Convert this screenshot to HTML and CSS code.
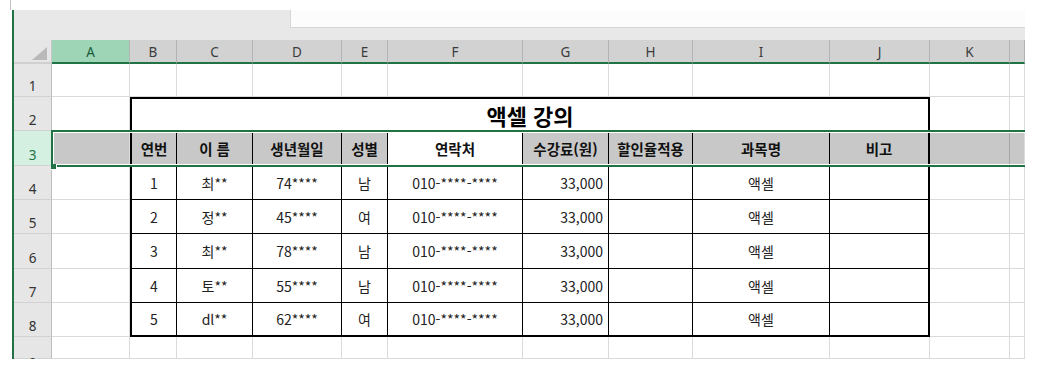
FILE: index.html
```html
<!DOCTYPE html>
<html lang="ko">
<head>
  <meta charset="UTF-8">
  <title>액셀 강의</title>
  <link rel="stylesheet" href="styles.css">
</head>
<body>
  <div class="app">
    <div class="edge">
      <div class="edge-top"></div>
      <div class="edge-rest"></div>
    </div>

    <div class="main">
      <!-- ribbon strip -->
      <div class="tabs">
        <div class="tabs-left"></div>
        <div class="tabs-right"><div class="tab-open"></div></div>
      </div>

      <!-- worksheet -->
      <div class="sheet">
        <!-- column headers -->
        <div class="corner"><span class="corner-tri"></span></div>
        <div class="ch ch-active">A</div>
        <div class="ch">B</div>
        <div class="ch">C</div>
        <div class="ch">D</div>
        <div class="ch">E</div>
        <div class="ch">F</div>
        <div class="ch">G</div>
        <div class="ch">H</div>
        <div class="ch">I</div>
        <div class="ch">J</div>
        <div class="ch">K</div>
        <div class="ch"></div>

        <!-- data block B2:J8 -->
        <div class="table">
          <div class="title">액셀 강의</div>

          <div class="th">연번</div>
          <div class="th">이 름</div>
          <div class="th">생년월일</div>
          <div class="th">성별</div>
          <div class="th th-active">연락처</div>
          <div class="th">수강료(원)</div>
          <div class="th">할인율적용</div>
          <div class="th">과목명</div>
          <div class="th">비고</div>

          <div class="td">1</div>
          <div class="td">최**</div>
          <div class="td">74****</div>
          <div class="td">남</div>
          <div class="td">010-****-****</div>
          <div class="td num">33,000</div>
          <div class="td"></div>
          <div class="td">액셀</div>
          <div class="td"></div>

          <div class="td">2</div>
          <div class="td">정**</div>
          <div class="td">45****</div>
          <div class="td">여</div>
          <div class="td">010-****-****</div>
          <div class="td num">33,000</div>
          <div class="td"></div>
          <div class="td">액셀</div>
          <div class="td"></div>

          <div class="td">3</div>
          <div class="td">최**</div>
          <div class="td">78****</div>
          <div class="td">남</div>
          <div class="td">010-****-****</div>
          <div class="td num">33,000</div>
          <div class="td"></div>
          <div class="td">액셀</div>
          <div class="td"></div>

          <div class="td">4</div>
          <div class="td">토**</div>
          <div class="td">55****</div>
          <div class="td">남</div>
          <div class="td">010-****-****</div>
          <div class="td num">33,000</div>
          <div class="td"></div>
          <div class="td">액셀</div>
          <div class="td"></div>

          <div class="td last">5</div>
          <div class="td last">dl**</div>
          <div class="td last">62****</div>
          <div class="td last">여</div>
          <div class="td last">010-****-****</div>
          <div class="td last num">33,000</div>
          <div class="td last"></div>
          <div class="td last">액셀</div>
          <div class="td last"></div>
        </div>

        <!-- row 1 -->
        <div class="rh">1</div>
        <div class="c"></div><div class="c"></div><div class="c"></div><div class="c"></div><div class="c"></div>
        <div class="c"></div><div class="c"></div><div class="c"></div><div class="c"></div><div class="c"></div>
        <div class="c"></div><div class="c"></div>

        <!-- rows 2-8: A, K, L only (table fills B-J) -->
        <div class="rh">2</div><div class="c"></div><div class="c"></div><div class="c"></div>
        <div class="rh rh-active">3</div><div class="c sel"></div><div class="c sel sel-k"></div><div class="c sel"></div>
        <div class="rh">4</div><div class="c"></div><div class="c"></div><div class="c"></div>
        <div class="rh">5</div><div class="c"></div><div class="c"></div><div class="c"></div>
        <div class="rh">6</div><div class="c"></div><div class="c"></div><div class="c"></div>
        <div class="rh">7</div><div class="c"></div><div class="c"></div><div class="c"></div>
        <div class="rh">8</div><div class="c"></div><div class="c"></div><div class="c"></div>

        <!-- row 9 (cut off) -->
        <div class="rh rh-cut">9</div>
        <div class="c"></div><div class="c"></div><div class="c"></div><div class="c"></div><div class="c"></div>
        <div class="c"></div><div class="c"></div><div class="c"></div><div class="c"></div><div class="c"></div>
        <div class="c"></div><div class="c"></div>

        <!-- selection of row 3 -->
        <div class="selection"></div>
        <div class="fill-handle"></div>
      </div>
    </div>
  </div>
</body>
</html>
```

FILE: styles.css
```css
html, body {
  margin: 0;
  padding: 0;
  background: #fff;
  font-family: "Noto Sans CJK KR", "Noto Sans", sans-serif;
  color: #1a1a1a;
}

.app {
  display: flex;
  width: 1025px;
  height: 359px;
}

/* left window edge */
.edge {
  display: flex;
  flex-direction: column;
  width: 14px;
}

.edge-top {
  width: 10px;
  height: 10px;
  border-right: 1px solid #c4c4c4;
}

.edge-rest {
  flex: 1;
  border-right: 2px solid #217346;
  box-sizing: border-box;
  width: 14px;
}

.main {
  display: flex;
  flex-direction: column;
  flex: 1;
  padding-top: 10px;
}

/* strip above the column headers */
.tabs {
  display: flex;
  height: 30px;
  background: #e8e8e8;
}

.tabs-left {
  width: 276px;
}

.tabs-right {
  flex: 1;
}

.tab-open {
  height: 18px;
  box-sizing: border-box;
  background: #fcfcfc;
  border-left: 1px solid #d6d6d6;
  border-bottom: 1px solid #d6d6d6;
}

/* worksheet grid */
.sheet {
  position: relative;
  display: grid;
  grid-template-columns: 38px 78px 47px 76px 89px 46px 135px 86px 84px 137px 100px 80px 15px;
  grid-template-rows: 24px 33px 34px 35px 34px 34px 35px 34px 34px 22px;
  height: 319px;
  overflow: hidden;
}

.sheet > div {
  box-sizing: border-box;
}

.corner {
  position: relative;
  background: #e6e6e6;
  border-right: 1px solid #c6c6c6;
  border-bottom: 2px solid #d0d0d0;
}

.corner-tri {
  position: absolute;
  right: 4px;
  bottom: 2px;
  width: 0;
  height: 0;
  border-left: 15px solid transparent;
  border-bottom: 13px solid #b9b9b9;
}

.ch {
  display: flex;
  align-items: center;
  justify-content: center;
  background: #d2d2d2;
  border-right: 1px solid #b3b3b3;
  border-bottom: 2px solid #217346;
  font-family: "Noto Sans", sans-serif;
  font-size: 13.5px;
  color: #3c3c3c;
  padding-top: 1px;
}

.ch-active {
  background: #9fd5b7;
  color: #185c37;
}

.rh {
  display: flex;
  align-items: flex-end;
  justify-content: center;
  padding-bottom: 2px;
  background: #e6e6e6;
  border-right: 1px solid #bdbdbd;
  border-bottom: 1px solid #d2d2d2;
  font-family: "Noto Sans", sans-serif;
  font-size: 13.5px;
  line-height: 16px;
  color: #333;
}

.rh-active {
  background: #d3f0e0;
  color: #217346;
}

.rh-cut {
  align-items: flex-start;
  padding-top: 18px;
}

.c {
  border-right: 1px solid #dadada;
  border-bottom: 1px solid #dadada;
}

.sel {
  background: #c8c8c8;
}

.sel-k {
  border-right-color: #a6a6a6;
}

/* the bordered block */
.table {
  grid-column: 3 / 12;
  grid-row: 3 / 10;
  display: grid;
  grid-template-columns: 45px 76px 89px 46px 135px 86px 84px 137px 98px;
  grid-template-rows: 32px 35px 34px 34px 35px 34px 32px;
  border: 2px solid #000;
  background: #fff;
}

.title {
  grid-column: 1 / -1;
  display: flex;
  align-items: center;
  justify-content: center;
  border-bottom: 1px solid #000;
  font-size: 22px;
  font-weight: bold;
  color: #000;
  padding-top: 1px;
}

.th, .td {
  display: flex;
  align-items: center;
  justify-content: center;
  box-sizing: border-box;
  border-right: 1px solid #000;
  border-bottom: 1px solid #000;
  white-space: nowrap;
}

.th:nth-child(9n + 1),
.td:nth-child(9n + 1) {
  border-right: none;
}

.th {
  background: #c8c8c8;
  font-size: 14.5px;
  font-weight: bold;
  color: #111;
}

.th-active {
  background: #fff;
}

.td {
  font-size: 14px;
  color: #222;
}

.td.num {
  justify-content: flex-end;
  padding-right: 5px;
}

.td.last {
  border-bottom: none;
}

/* selected row outline */
.selection {
  position: absolute;
  left: 37px;
  top: 90px;
  right: -4px;
  height: 37px;
  border: 2px solid #217346;
  box-shadow: inset 0 0 0 1px #fff;
  pointer-events: none;
}

.fill-handle {
  position: absolute;
  left: 37px;
  top: 124px;
  width: 6px;
  height: 6px;
  background: #217346;
  border: 1px solid #fff;
  border-left: none;
  border-top: none;
}
```
